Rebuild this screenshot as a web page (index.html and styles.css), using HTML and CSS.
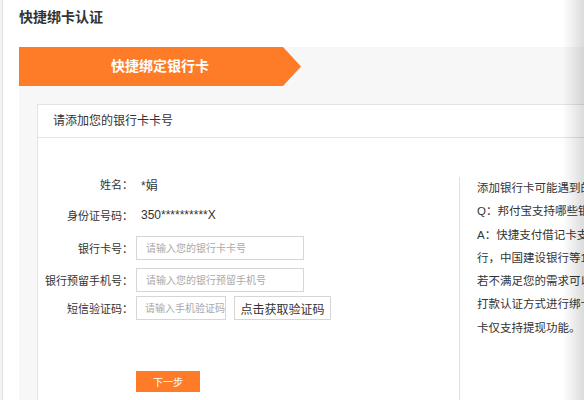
FILE: index.html
```html
<!DOCTYPE html>
<html lang="zh-CN">
<head>
<meta charset="utf-8">
<title>快捷绑卡认证</title>
<link rel="stylesheet" href="styles.css">
</head>
<body>
<div class="page">
  <h1 class="title">快捷绑卡认证</h1>
  <div class="panel">
    <div class="tab">快捷绑定银行卡</div>
    <div class="card">
      <div class="card-head">请添加您的银行卡卡号</div>
      <div class="card-body">
        <div class="form">
          <div class="row row-name">
            <span class="label">姓名：</span>
            <span class="value">*娟</span>
          </div>
          <div class="row row-id">
            <span class="label">身份证号码：</span>
            <span class="value">350**********X</span>
          </div>
          <div class="row row-card">
            <span class="label">银行卡号：</span>
            <input class="input" type="text" placeholder="请输入您的银行卡卡号">
          </div>
          <div class="row row-phone">
            <span class="label">银行预留手机号：</span>
            <input class="input" type="text" placeholder="请输入您的银行预留手机号">
          </div>
          <div class="row row-sms">
            <span class="label">短信验证码：</span>
            <input class="input input-sms" type="text" placeholder="请输入手机验证码">
            <button class="btn-code" type="button">点击获取验证码</button>
          </div>
          <button class="btn-next" type="button">下一步</button>
        </div>
        <div class="help">
          <p>添加银行卡可能遇到的问题：</p>
          <p>Q：邦付宝支持哪些银行？</p>
          <p>A：快捷支付借记卡支持中国工商银</p>
          <p>行，中国建设银行等1</p>
          <p>若不满足您的需求可以选择</p>
          <p>打款认证方式进行绑卡，绑</p>
          <p>卡仅支持提现功能。</p>
        </div>
      </div>
    </div>
  </div>
</div>
<div class="edge-shadow"></div>
</body>
</html>
```
FILE: styles.css
```css
html, body {
  margin: 0;
  padding: 0;
  height: 100%;
}
body {
  background: #f3f3f3;
  overflow: hidden;
  font-family: "Liberation Sans", "Noto Sans CJK SC", sans-serif;
  color: #333;
}
.page {
  margin-left: 2px;
  border-left: 1px solid #e2e2e2;
  background: #fff;
  padding-left: 16px;
  width: 900px;
  min-height: 100%;
}
.title {
  margin: 0;
  height: 47px;
  line-height: 34px;
  font-size: 14px;
  font-weight: bold;
  color: #333;
}
.panel {
  background: #f7f7f7;
  padding-bottom: 40px;
}
.tab {
  width: 282px;
  height: 39px;
  line-height: 39px;
  background: #fe7b28;
  color: #fff;
  font-size: 14px;
  font-weight: bold;
  text-align: center;
  clip-path: polygon(0 0, 264px 0, 282px 50%, 264px 100%, 0 100%);
}
.card {
  margin: 18px 0 0 18px;
  background: #fff;
  border: 1px solid #e3e3e3;
}
.card-head {
  height: 32px;
  line-height: 32px;
  padding-left: 15px;
  font-size: 12px;
  color: #333;
  border-bottom: 1px solid #e3e3e3;
}
.card-body {
  display: flex;
  align-items: flex-start;
  height: 400px;
}
.form {
  width: 421px;
  padding-top: 34px;
  display: flex;
  flex-direction: column;
}
.row {
  display: flex;
  align-items: center;
  height: 24px;
  font-size: 12px;
}
.row-id { margin-top: 7px; }
.row-card { margin-top: 9px; }
.row-phone { margin-top: 8px; }
.row-sms { margin-top: 4px; }
.label {
  width: 95px;
  margin-right: 3px;
  flex: none;
  white-space: nowrap;
  text-align: right;
  font-size: 11px;
  color: #333;
}
.value {
  padding-left: 5px;
  color: #333;
}
.input {
  box-sizing: border-box;
  width: 168px;
  height: 24px;
  border: 1px solid #d6d6d6;
  padding: 0 0 0 9px;
  margin: 0;
  font-family: inherit;
  font-size: 10px;
  color: #333;
  outline: none;
}
.input::placeholder {
  color: #a9a9a9;
}
.input-sms {
  width: 90px;
  padding-left: 8px;
}
.btn-code {
  box-sizing: border-box;
  margin-left: 8px;
  width: 97px;
  height: 24px;
  padding: 0;
  background: #fff;
  border: 1px solid #d6d6d6;
  font-family: inherit;
  font-size: 12px;
  color: #333;
}
.btn-next {
  margin: 51px 0 0 98px;
  width: 64px;
  height: 21px;
  padding: 0;
  border: 0;
  background: #fe7b28;
  color: #fff;
  font-family: inherit;
  font-size: 10px;
  align-self: flex-start;
}
.help {
  margin-top: 39px;
  border-left: 1px solid #e0e0e0;
  padding-left: 17px;
  height: 300px;
  font-size: 11.5px;
  color: #333;
}
.help p {
  margin: 0;
  line-height: 23.3px;
  white-space: nowrap;
}
.edge-shadow {
  position: fixed;
  top: 0;
  right: 0;
  width: 22px;
  height: 100%;
  background: linear-gradient(to right, rgba(0,0,0,0), rgba(0,0,0,0.05) 40%, rgba(0,0,0,0.14));
}
```
